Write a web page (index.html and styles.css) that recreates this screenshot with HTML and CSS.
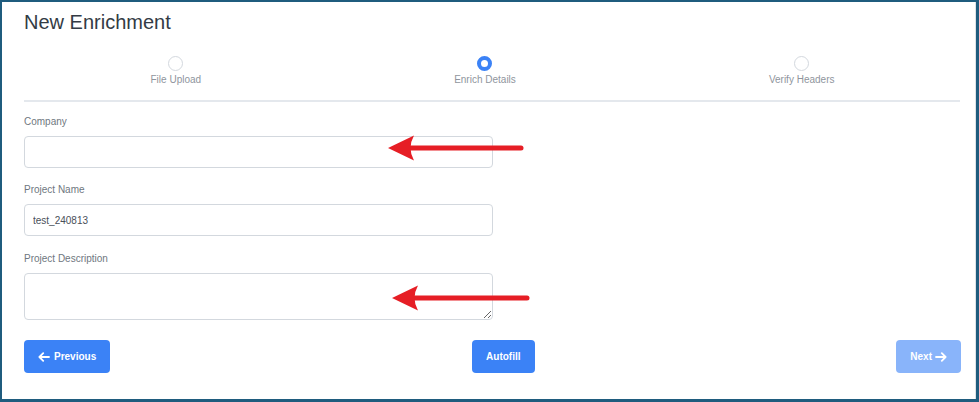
FILE: index.html
```html
<!DOCTYPE html>
<html lang="en">
<head>
<meta charset="utf-8">
<title>New Enrichment</title>
<link rel="stylesheet" href="styles.css">
</head>
<body>
<div class="frame">
  <div class="card">
    <h1 class="title">New Enrichment</h1>
    <div class="steps">
      <div class="step"><span class="dot"></span><span class="step-label">File Upload</span></div>
      <div class="step"><span class="dot dot-active"></span><span class="step-label">Enrich Details</span></div>
      <div class="step"><span class="dot"></span><span class="step-label">Verify Headers</span></div>
    </div>
    <div class="sep"></div>
    <form class="form">
      <div class="field">
        <label class="label" for="company">Company</label>
        <input class="input" id="company" type="text">
      </div>
      <div class="field">
        <label class="label" for="pname">Project Name</label>
        <input class="input" id="pname" type="text" value="test_240813">
      </div>
      <div class="field field-desc">
        <label class="label" for="pdesc">Project Description</label>
        <textarea class="input textarea" id="pdesc"></textarea>
      </div>
    </form>
    <div class="actions">
      <button class="btn" type="button">
        <svg class="btn-icon" width="12" height="10" viewBox="0 0 12 10"><path d="M11 5H1.5M5.2 1.2L1.4 5l3.8 3.8" fill="none" stroke="#fff" stroke-width="1.8" stroke-linecap="round" stroke-linejoin="round"/></svg>
        <span>Previous</span>
      </button>
      <button class="btn" type="button"><span>Autofill</span></button>
      <button class="btn btn-disabled" type="button">
        <span>Next</span>
        <svg class="btn-icon" width="12" height="10" viewBox="0 0 12 10"><path d="M1 5h9.5M6.8 1.2L10.6 5 6.8 8.8" fill="none" stroke="#fff" stroke-width="1.8" stroke-linecap="round" stroke-linejoin="round"/></svg>
      </button>
    </div>
  </div>
  <svg class="annot annot-1" width="140" height="28" viewBox="0 0 140 28">
    <path d="M20 14H135" stroke="#e61e25" stroke-width="5" stroke-linecap="round"/>
    <path d="M2 14L28 1.5Q21 14 28 26.5Z" fill="#e61e25"/>
  </svg>
  <svg class="annot annot-2" width="142" height="28" viewBox="0 0 142 28">
    <path d="M20 14H137" stroke="#e61e25" stroke-width="5" stroke-linecap="round"/>
    <path d="M2 14L28 1.5Q21 14 28 26.5Z" fill="#e61e25"/>
  </svg>
</div>
</body>
</html>
```

FILE: styles.css
```css
* { box-sizing: border-box; }

html, body {
  margin: 0;
  padding: 0;
  background: #ffffff;
}

body {
  font-family: "Liberation Sans", Arial, sans-serif;
}

.frame {
  position: relative;
  width: 979px;
  height: 402px;
  border-style: solid;
  border-color: #1f5c7e;
  border-width: 2px 3px 3px 2px;
  background: #fff;
  overflow: hidden;
}

.card {
  height: 100%;
  padding: 8px 14px 0 22px;
  border-right: 1px solid #dfe3e8;
}

.title {
  margin: 0;
  font-size: 20px;
  line-height: 24px;
  font-weight: normal;
  color: #333b45;
}

.steps {
  display: flex;
  justify-content: space-around;
  margin-top: 22px;
}

.step {
  display: flex;
  flex-direction: column;
  align-items: center;
}

.dot {
  width: 15px;
  height: 15px;
  border-radius: 50%;
  border: 1.5px solid #d3d8de;
  background: #fff;
}

.dot-active {
  border: 4px solid #3b82f6;
}

.step-label {
  margin-top: 3px;
  font-size: 10px;
  line-height: 12px;
  color: #8f959d;
}

.sep {
  height: 2px;
  margin-top: 14px;
  margin-right: 1px;
  background: #e4e8ed;
}

.form {
  margin-top: 13px;
}

.field + .field {
  margin-top: 15px;
}

.field-desc.field {
  margin-top: 16px;
}

.label {
  display: block;
  margin-bottom: 7px;
  font-size: 10px;
  line-height: 14px;
  color: #6f7780;
}

.input {
  display: block;
  width: 50%;
  height: 32px;
  margin: 0;
  padding: 0 8px;
  border: 1px solid #d3d8de;
  border-radius: 4px;
  font-family: "Liberation Sans", Arial, sans-serif;
  font-size: 10px;
  color: #4a5059;
  background: #fff;
  outline: none;
}

.textarea {
  height: 47px;
  padding: 6px 8px;
}

.actions {
  display: flex;
  justify-content: space-between;
  margin-top: 20px;
}

.btn {
  display: flex;
  align-items: center;
  gap: 4px;
  height: 33px;
  padding: 0 14px;
  border: none;
  border-radius: 4px;
  background: #3b82f6;
  color: #fff;
  font-family: "Liberation Sans", Arial, sans-serif;
  font-size: 10px;
  font-weight: bold;
}

.btn-disabled {
  background: #89b4fa;
  gap: 3px;
}

.btn-icon {
  display: block;
}

.annot {
  position: absolute;
}

.annot-1 {
  left: 384px;
  top: 132px;
}

.annot-2 {
  left: 388px;
  top: 282px;
}
```
